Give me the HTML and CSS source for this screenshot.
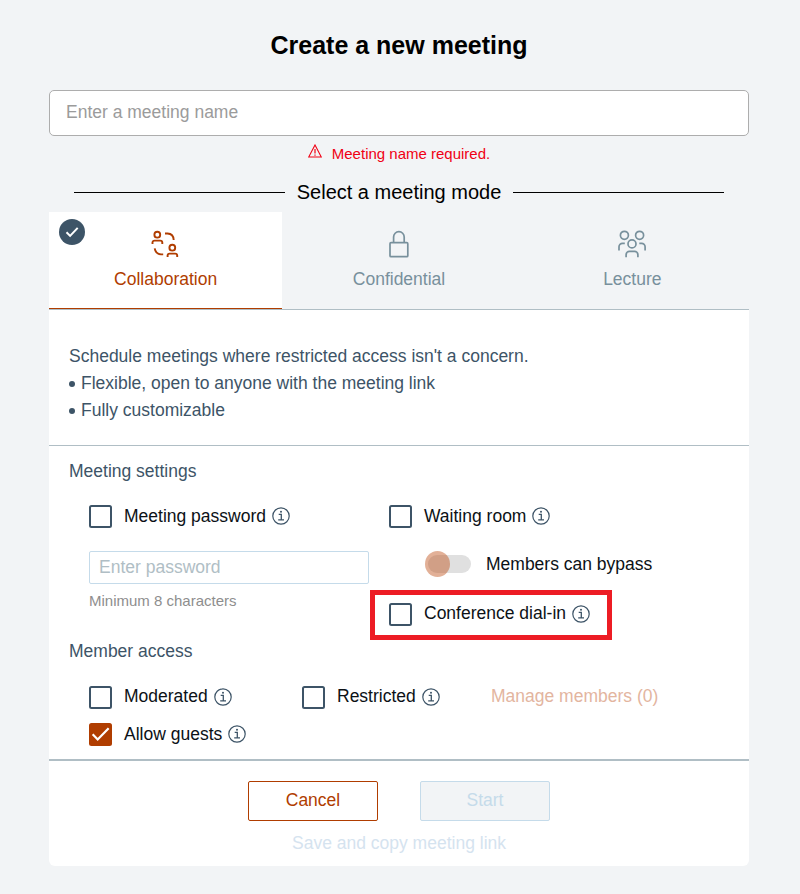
FILE: index.html
```html
<!DOCTYPE html>
<html lang="en">
<head>
<meta charset="utf-8">
<title>Create a new meeting</title>
<link rel="stylesheet" href="styles.css">
</head>
<body>
<svg width="0" height="0" class="defs" aria-hidden="true">
  <symbol id="info" viewBox="0 0 18 18">
    <circle cx="9" cy="9" r="8.2" fill="none" stroke="currentColor" stroke-width="1.2"/>
    <path d="M6.7 7.4h2.6v5.4M6.2 12.9h5.8" fill="none" stroke="currentColor" stroke-width="1.3"/>
    <circle cx="9" cy="4.7" r="1" fill="currentColor"/>
  </symbol>
</svg>
<main class="dialog">
  <h1 class="title">Create a new meeting</h1>
  <input class="name-input" type="text" placeholder="Enter a meeting name">
  <p class="error">
    <svg class="error-icon" viewBox="0 0 14 14" fill="none" stroke="currentColor"><path d="M7 1 13.3 13H.7Z" stroke-width="1.1"/><path d="M7 5v4.4M7 10.5v1.2" stroke-width="1.2"/></svg>
    <span>Meeting name required.</span>
  </p>
  <h2 class="divider">Select a meeting mode</h2>

  <div class="tabs">
    <button class="tab active">
      <svg class="badge" viewBox="0 0 26 26"><circle cx="13" cy="13" r="13" fill="#3d5467"/><path d="m7.5 13.3 3.6 3.6 7.6-8" fill="none" stroke="#fff" stroke-width="2"/></svg>
      <svg class="tab-icon" viewBox="0 0 28 28" fill="none" stroke="currentColor" stroke-width="1.9">
        <circle cx="6.3" cy="4.7" r="2.9"/><path d="M1.5 14v-1.4a2 2 0 0 1 2-2h5.8a2 2 0 0 1 2 2V14"/>
        <circle cx="21.3" cy="17.7" r="2.9"/><path d="M16.6 27v-1.4a2 2 0 0 1 2-2h5.6a2 2 0 0 1 2 2V27"/>
        <path d="M14 3.5h2.5q6 .3 6.2 6.5M3.7 18.3q.8 5.7 6.3 6.1h2.2"/>
      </svg>
      <span>Collaboration</span>
    </button>
    <button class="tab">
      <svg class="tab-icon" viewBox="0 0 28 28" fill="none" stroke="currentColor" stroke-width="1.7"><rect x="5" y="12.7" width="17.8" height="14" rx="1"/><path d="M8.6 12.7V7a5.3 5.3 0 0 1 10.6 0v5.7"/></svg>
      <span>Confidential</span>
    </button>
    <button class="tab">
      <svg class="tab-icon" viewBox="0 0 28 28" fill="none" stroke="currentColor" stroke-width="1.7">
        <circle cx="6.4" cy="5.3" r="4"/><circle cx="21.6" cy="5.3" r="4"/><circle cx="14" cy="13.9" r="4"/>
        <path d="M1 20.5v-3.7a3.5 3.5 0 0 1 3.5-3.5h2.3M27.1 20.5v-3.7a3.5 3.5 0 0 0-3.5-3.5h-2.3M8.1 27.2v-2.5a3.3 3.3 0 0 1 3.3-3.3h5.2a3.3 3.3 0 0 1 3.3 3.3v2.5"/>
      </svg>
      <span>Lecture</span>
    </button>
  </div>

  <section class="panel">
    <div class="description">
      <p>Schedule meetings where restricted access isn't a concern.</p>
      <ul>
        <li>Flexible, open to anyone with the meeting link</li>
        <li>Fully customizable</li>
      </ul>
    </div>

    <div class="options">
      <h3 class="heading">Meeting settings</h3>
      <div class="settings">
        <div class="column">
          <label class="check"><span class="box"></span>Meeting password<svg class="info"><use href="#info"/></svg></label>
          <input class="password" type="text" placeholder="Enter password">
          <small class="hint">Minimum 8 characters</small>
        </div>
        <div class="column">
          <label class="check"><span class="box"></span>Waiting room<svg class="info"><use href="#info"/></svg></label>
          <label class="bypass"><span class="switch"><span class="thumb"></span></span>Members can bypass</label>
          <div class="highlight">
            <label class="check low"><span class="box"></span>Conference dial-in<svg class="info"><use href="#info"/></svg></label>
          </div>
        </div>
      </div>
      <h3 class="heading">Member access</h3>
      <div class="access">
        <label class="check low"><span class="box"></span>Moderated<svg class="info"><use href="#info"/></svg></label>
        <label class="check low"><span class="box"></span>Restricted<svg class="info"><use href="#info"/></svg></label>
        <span class="manage">Manage members (0)</span>
      </div>
      <label class="check guests"><span class="box checked"><svg viewBox="0 0 22 22"><path d="m3.5 10.8 4.8 5L18.8 5" fill="none" stroke="#fff" stroke-width="2.1"/></svg></span>Allow guests<svg class="info"><use href="#info"/></svg></label>
    </div>

    <footer class="footer">
      <div class="buttons">
        <button class="button cancel">Cancel</button>
        <button class="button start">Start</button>
      </div>
      <span class="save">Save and copy meeting link</span>
    </footer>
  </section>
</main>
</body>
</html>
```
FILE: styles.css
```css
* { box-sizing: border-box; margin: 0; padding: 0; }
body {
  background: #f2f4f6;
  color: #0c1116;
  font: 17.5px/26px "Liberation Sans", Arial, sans-serif;
}
button, input { font: inherit; }
.defs { display: block; height: 0; }

.dialog { width: 700px; margin-left: 49px; padding-top: 30px; }
.title { font-size: 25px; line-height: 30px; height: 60px; text-align: center; color: #000; }
.name-input {
  display: block; width: 700px; height: 46px; padding: 0 16px 2px;
  border: 1px solid #adadad; border-radius: 5px; background: #fff;
}
.name-input::placeholder { color: #9b9b9b; opacity: 1; }
.error {
  display: flex; justify-content: center; height: 43px; padding-top: 8px;
  font-size: 15px; line-height: 20px; color: #f00014;
}
.error-icon { width: 14px; height: 14px; margin-right: 10px; }
.divider {
  display: flex; align-items: center; gap: 12px; height: 26px; padding: 0 25px;
  font-size: 20px; font-weight: 400; color: #000; white-space: nowrap;
}
.divider::before, .divider::after { content: ""; flex: 1; height: 1px; background: #000; }

.tabs { display: grid; grid-template-columns: repeat(3, 1fr); height: 98px; margin-top: 7px; }
.tab {
  position: relative; display: flex; flex-direction: column; align-items: center;
  padding-top: 18px; border: 0; border-bottom: 1px solid #b0bec5;
  background: transparent; color: #78909c;
}
.tab.active { background: #fff; color: #b03d00; box-shadow: inset 0 -1px #b03d00; }
.tab-icon { width: 28px; height: 28px; margin-bottom: 8px; }
.active .tab-icon { margin-right: 2px; }
.badge { position: absolute; left: 10px; top: 7px; width: 26px; height: 26px; }

.panel { height: 556px; background: #fff; border-radius: 0 0 6px 6px; }
.description {
  height: 136px; padding: 33px 20px 0; line-height: 27px; color: #3d5467;
  border-bottom: 1px solid #b0bec5;
}
.description ul { list-style: none; }
.description li { display: flex; align-items: center; gap: 6px; }
.description li::before { content: ""; width: 6px; height: 6px; border-radius: 50%; background: #3d5467; }

.options { height: 315px; padding: 12px 20px 0; border-bottom: 2px solid #b0bec5; }
.heading { font-size: inherit; font-weight: 400; color: #3d5467; }
.settings { display: flex; gap: 20px; height: 154px; padding: 20px 0 0 20px; }
.column { display: flex; flex-direction: column; width: 280px; }
.check { display: flex; align-items: center; height: 24px; white-space: nowrap; }
.box {
  width: 23px; height: 23px; margin: 0 12.5px 0 -.5px; flex: none;
  border: 2.5px solid #3d5467; border-radius: 2.5px;
}
.box.checked { border: 0; background: #b03d00; }
.box svg { display: block; width: 23px; height: 23px; }
.info { width: 18px; height: 18px; margin-left: 6px; flex: none; color: #3d5467; }
.low .box, .low .info { margin-top: 2px; }
.password {
  width: 280px; height: 33px; margin-top: 23px; padding: 0 9px 1px;
  border: 1px solid #c5dbea; border-radius: 2px; background: #fff;
}
.password::placeholder { color: #b0bec5; opacity: 1; }
.hint { margin-top: 7px; font-size: 15px; line-height: 20px; color: #8e8e8e; }
.bypass { display: flex; align-items: center; height: 26px; margin: 23px 0 13px 36px; }
.switch { width: 46px; height: 26px; padding: 4px 0; margin-right: 15px; position: relative; }
.switch::before { content: ""; display: block; margin-left: 3px; height: 18px; border-radius: 9px; background: #e0e0e0; }
.thumb { position: absolute; left: 0; top: 0; width: 25px; height: 26px; border-radius: 50%; background: rgba(190, 80, 25, .45); }
.highlight { width: 242px; height: 50px; margin-left: -19px; padding: 6px 14px; flex: none; border: 5px solid #ed1c24; }
.access { display: flex; align-items: center; height: 24px; margin: 20px 0 0 20px; }
.access .check:first-child { width: 213px; }
.access .check:nth-child(2) { width: 189px; }
.manage { color: #e3b59f; }
.guests { margin: 14px 0 0 20px; }

.footer { display: flex; flex-direction: column; align-items: center; padding-top: 20px; }
.buttons { display: flex; gap: 42px; }
.button { width: 130px; height: 40px; padding-bottom: 3px; border: 1px solid; border-radius: 2px; background: #fff; }
.cancel { color: #b03d00; }
.start { color: #c5dbea; background: #f2f4f6; }
.save { margin-top: 9px; color: #d5e3ef; }
```
